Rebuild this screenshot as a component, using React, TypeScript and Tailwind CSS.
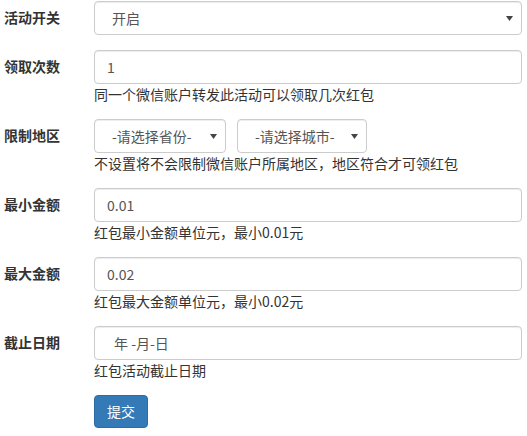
import React from "react";

const fieldBox =
  "h-[34px] w-full rounded-[4px] border border-[#ccc] bg-white text-[14px] text-[#555] shadow-[inset_0_1px_1px_rgba(0,0,0,0.075)] outline-none";

const Arrow = () => (
  <svg width="7" height="5" viewBox="0 0 7 5" className="absolute top-[15px] right-[9px]">
    <path d="M0 0H7L3.5 5Z" fill="#444" />
  </svg>
);

const SelectBox = ({ text, className }: { text: string; className: string }) => (
  <div className={`relative ${className}`}>
    <div className={`${fieldBox} flex items-center pl-[17px]`}>{text}</div>
    <Arrow />
  </div>
);

const Row = ({ label, children, help }: { label: string; children: React.ReactNode; help?: string }) => (
  <div className="mb-[15px] flex">
    <div className="w-[94px] shrink-0 pt-[6px] pl-[4px] text-[14px] font-bold leading-5 text-[#333]">{label}</div>
    <div className="w-[428px]">
      {children}
      {help && <p className="text-[14px] leading-5 text-[#333]">{help}</p>}
    </div>
  </div>
);

export default function App() {
  return (
    <div className="h-[436px] w-[527px] overflow-hidden bg-white pt-px font-['Noto_Sans_CJK_SC','Noto_Sans',sans-serif]">
      <Row label="活动开关">
        <SelectBox text="开启" className="w-full" />
      </Row>
      <Row label="领取次数" help="同一个微信账户转发此活动可以领取几次红包">
        <input readOnly value="1" className={`${fieldBox} px-3`} />
      </Row>
      <Row label="限制地区" help="不设置将不会限制微信账户所属地区，地区符合才可领红包">
        <div className="flex gap-[11px]">
          <SelectBox text="-请选择省份-" className="w-[132px]" />
          <SelectBox text="-请选择城市-" className="w-[130px]" />
        </div>
      </Row>
      <Row label="最小金额" help="红包最小金额单位元，最小0.01元">
        <input readOnly value="0.01" className={`${fieldBox} px-3`} />
      </Row>
      <Row label="最大金额" help="红包最大金额单位元，最小0.02元">
        <input readOnly value="0.02" className={`${fieldBox} px-3`} />
      </Row>
      <Row label="截止日期" help="红包活动截止日期">
        <input readOnly value="年 -月-日" className={`${fieldBox} pr-3 pl-[19px] text-[#333]`} />
      </Row>
      <div className="pl-[94px]">
        <button className="h-[33px] w-[54px] rounded-[4px] border border-[#2e6da4] bg-[#337ab7] text-[14px] text-white">
          提交
        </button>
      </div>
    </div>
  );
}
